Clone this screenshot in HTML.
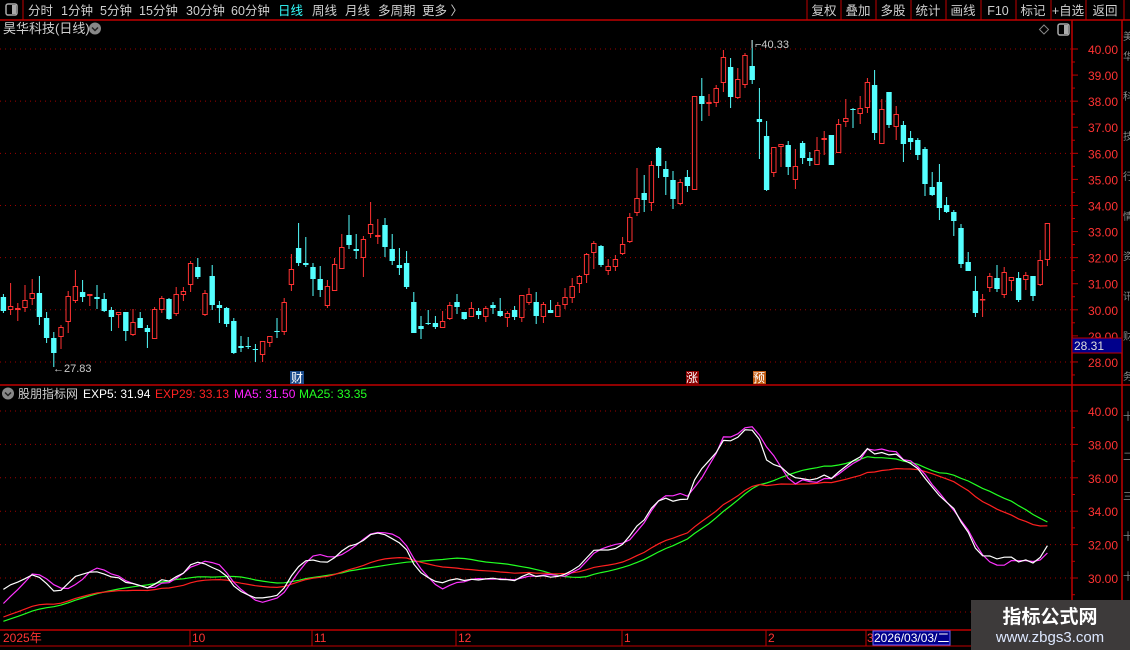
<!DOCTYPE html>
<html><head><meta charset="utf-8">
<style>
*{margin:0;padding:0}
body{width:1130px;height:650px;background:#000;overflow:hidden;position:relative;font-family:"Liberation Sans","Noto Sans CJK SC",sans-serif;}
svg{position:absolute;left:0;top:0}
</style></head>
<body>
<svg id="s" width="1130" height="650" xmlns="http://www.w3.org/2000/svg" font-family="Liberation Sans, Noto Sans CJK SC, sans-serif">
<line x1="0" y1="20" x2="1130" y2="20" stroke="#c00000" stroke-width="1.5"/>
<line x1="23" y1="0" x2="23" y2="20" stroke="#c00000"/>
<rect x="6" y="4" width="11" height="11" rx="2" fill="none" stroke="#aaa" stroke-width="1.5"/>
<rect x="12" y="5" width="4" height="9" fill="#aaa"/>
<g font-size="12.5" fill="#cfcfcf">
<text x="28" y="15">分时</text><text x="61" y="15">1分钟</text><text x="100" y="15">5分钟</text>
<text x="139" y="15">15分钟</text><text x="186" y="15">30分钟</text><text x="231" y="15">60分钟</text>
<text x="278" y="15" fill="#3ff">日线</text><text x="312" y="15">周线</text><text x="345" y="15">月线</text>
<text x="378" y="15">多周期</text><text x="422" y="15">更多 〉</text>
</g>
<g stroke="#c00000">
<line x1="807" y1="0" x2="807" y2="20"/><line x1="841" y1="0" x2="841" y2="20"/><line x1="876" y1="0" x2="876" y2="20"/>
<line x1="911" y1="0" x2="911" y2="20"/><line x1="946" y1="0" x2="946" y2="20"/><line x1="981" y1="0" x2="981" y2="20"/>
<line x1="1016" y1="0" x2="1016" y2="20"/><line x1="1051" y1="0" x2="1051" y2="20"/><line x1="1086" y1="0" x2="1086" y2="20"/>
<line x1="1124" y1="0" x2="1124" y2="20"/>
</g>
<g font-size="12.5" fill="#cfcfcf" text-anchor="middle">
<text x="824" y="15">复权</text><text x="858" y="15">叠加</text><text x="893" y="15">多股</text><text x="928" y="15">统计</text>
<text x="963" y="15">画线</text><text x="998" y="15">F10</text><text x="1033" y="15">标记</text><text x="1068" y="15">+自选</text><text x="1105" y="15">返回</text>
</g>
<text x="3" y="33" font-size="13" fill="#cfcfcf">昊华科技(日线)</text>
<circle cx="95" cy="28.5" r="6" fill="#888"/><path d="M92 27.5l3 3 3-3" stroke="#222" stroke-width="1.5" fill="none"/>
<path d="M1044 25l4.5 4.5-4.5 4.5-4.5-4.5z" fill="none" stroke="#888"/>
<rect x="1058" y="24" width="11" height="11" rx="2" fill="none" stroke="#aaa" stroke-width="1.5"/><rect x="1064" y="25" width="4" height="9" fill="#aaa"/>
<line x1="1072" y1="20" x2="1072" y2="646" stroke="#c00000" stroke-width="1.5"/>
<line x1="1122" y1="20" x2="1122" y2="646" stroke="#c00000" stroke-width="1.5"/>
<line x1="0" y1="385" x2="1130" y2="385" stroke="#c00000" stroke-width="1.5"/>
<line x1="0" y1="630" x2="1122" y2="630" stroke="#c00000" stroke-width="1.5"/>
<line x1="0" y1="646" x2="1122" y2="646" stroke="#c00000" stroke-width="1"/>
<g id="grid"></g>
<g id="candles"></g>
<g id="ind"></g>
<text x="53" y="372" font-size="11" fill="#ccc">←27.83</text>
<line x1="752" y1="40" x2="752" y2="48" stroke="#ccc"/><text x="755" y="48" font-size="11" fill="#ccc">⌐40.33</text>
<rect x="290" y="371" width="14" height="13" fill="#1a4a8a"/><text x="291" y="382" font-size="12" fill="#fff">财</text>
<rect x="686" y="371" width="13" height="13" fill="#8b0000"/><text x="686" y="382" font-size="12" fill="#fff">涨</text>
<rect x="753" y="371" width="13" height="13" fill="#c05a10"/><text x="753" y="382" font-size="12" fill="#fff">预</text>
<rect x="1072" y="338" width="50" height="15" fill="#00008b" stroke="#c00000"/><text x="1074" y="350" font-size="12" fill="#ddd">28.31</text>
<circle cx="8" cy="393.5" r="6" fill="#888"/><path d="M5 392.5l3 3 3-3" stroke="#222" stroke-width="1.5" fill="none"/>
<g font-size="12">
<text x="18" y="398" fill="#cfcfcf">股朋指标网</text>
<text x="83" y="398" fill="#fff">EXP5: 31.94</text>
<text x="155" y="398" fill="#f22">EXP29: 33.13</text>
<text x="234" y="398" fill="#f2f">MA5: 31.50</text>
<text x="299" y="398" fill="#2f2">MA25: 33.35</text>
</g>
<g stroke="#c00000">
<line x1="190" y1="630" x2="190" y2="646"/><line x1="312" y1="630" x2="312" y2="646"/><line x1="456" y1="630" x2="456" y2="646"/>
<line x1="622" y1="630" x2="622" y2="646"/><line x1="766" y1="630" x2="766" y2="646"/><line x1="866" y1="630" x2="866" y2="646"/>
</g>
<g font-size="12" fill="#f33">
<text x="3" y="642">2025年</text><text x="192" y="642">10</text><text x="314" y="642">11</text><text x="458" y="642">12</text>
<text x="624" y="642">1</text><text x="768" y="642">2</text><text x="867" y="642">3</text>
</g>
<rect x="873" y="631" width="77" height="14" fill="#00008b" stroke="#66f"/>
<text x="874" y="642" font-size="12" fill="#fff">2026/03/03/二</text>
<g font-size="10" fill="#888">
<text x="1123" y="40">美</text><text x="1123" y="60">华</text><text x="1123" y="100">科</text><text x="1123" y="140">技</text><text x="1123" y="180">行</text><text x="1123" y="220">情</text><text x="1123" y="260">资</text><text x="1123" y="300">讯</text><text x="1123" y="340">财</text><text x="1123" y="380">务</text><text x="1123" y="420">十</text><text x="1123" y="460">二</text><text x="1123" y="500">三</text><text x="1123" y="540">十</text><text x="1123" y="580">十</text>
</g>
<rect x="971" y="600" width="159" height="50" fill="#3d3a3a"/>
<text x="1050" y="623" font-size="19" font-weight="bold" fill="#fff" text-anchor="middle">指标公式网</text>
<text x="1050" y="642" font-size="15" fill="#dde8ff" text-anchor="middle">www.zbgs3.com</text>
</svg>
<script>
var NS="http://www.w3.org/2000/svg";
function el(p,t,a){var e=document.createElementNS(NS,t);for(var k in a)e.setAttribute(k,a[k]);p.appendChild(e);return e;}
var g=document.getElementById("grid");
for(var p=28;p<=40;p++){var y=49+(40-p)*26.08;
 el(g,"line",{x1:1072,y1:y,x2:1078,y2:y,stroke:"#c00000"});
 el(g,"line",{x1:1072,y1:y+13,x2:1075,y2:y+13,stroke:"#c00000"});
 if(p%2==0)el(g,"line",{x1:0,y1:y,x2:1072,y2:y,stroke:"#a00000","stroke-dasharray":"1 4"});
 var t=el(g,"text",{x:1088,y:y+5,"font-size":"12",fill:"#f33"});t.textContent=p.toFixed(2);}
for(var p=30;p<=40;p+=2){var y=411+(40-p)*16.7;
 el(g,"line",{x1:0,y1:y,x2:1072,y2:y,stroke:"#a00000","stroke-dasharray":"1 4"});
 el(g,"line",{x1:1072,y1:y,x2:1078,y2:y,stroke:"#c00000"});
 el(g,"line",{x1:1072,y1:y+16.7,x2:1075,y2:y+16.7,stroke:"#c00000"});
 var t=el(g,"text",{x:1088,y:y+5,"font-size":"12",fill:"#f33"});t.textContent=p.toFixed(2);}
el(g,"line",{x1:0,y1:612,x2:1072,y2:612,stroke:"#a00000","stroke-dasharray":"1 4"});
var D=[
"c,297,311,294,313","r,306,310,283,315","r,308,310,303,321","r,300,308,285,312","r,293,299,279,305","c,293,317,276,325","c,318,338,312,343","c,338,353,332,367","r,327,337,325,349","r,296,322,291,333",
"r,286,301,270,303","c,292,297,280,302","r,294,296,294,306","c,297,299,285,309","c,299,311,293,312","c,310,317,307,331","r,312,315,312,328","c,312,331,312,341","r,322,335,309,336","c,318,328,312,328",
"c,328,332,325,348","r,309,339,307,339","r,298,310,296,313","c,299,319,298,320","r,294,314,287,316","r,291,295,287,301","r,263,285,261,292","c,267,277,258,279","r,293,315,290,316","c,276,305,265,310",
"c,305,308,301,323","c,308,324,307,327","c,321,353,318,354","c,346,348,336,352","c,346,347,337,349","c,349,350,344,362","r,341,355,341,362","r,336,343,336,347","c,331,332,318,338","r,302,332,298,335",
"r,269,285,254,291","c,248,263,223,266","c,263,265,237,267","c,267,279,263,296","c,279,290,266,297","r,286,306,280,308","r,264,291,258,291","r,247,269,234,269","c,235,245,215,249","c,249,251,234,259",
"r,239,258,236,277","r,224,234,202,238","r,235,237,219,244","c,225,247,218,257","c,249,261,234,265","c,265,268,248,275","c,263,287,251,289","c,302,333,292,333","c,326,329,316,339","c,323,324,310,325",
"c,323,327,316,329","r,321,328,311,328","r,305,319,302,320","c,302,307,294,314","c,312,319,312,320","r,308,317,302,317","c,311,315,308,319","r,308,317,306,322","c,305,308,302,314","c,311,316,298,317",
"r,313,318,311,327","c,310,317,306,320","r,295,318,295,322","r,294,303,288,305","c,302,316,292,324",
"r,304,317,302,323","c,310,313,300,313","r,305,317,302,317","r,297,305,288,309","r,286,298,278,303","r,276,284,275,293","r,254,275,253,283","r,243,253,241,269","c,246,265,245,267","r,266,271,259,275",
"r,259,267,255,271","r,244,254,237,255","r,217,242,213,243","r,198,213,168,216","c,193,200,175,212","r,165,203,161,211","c,148,166,147,178","c,169,177,161,195","c,180,199,171,209","r,182,204,179,205",
"c,177,186,170,192","r,96,190,96,190","c,96,104,78,121","r,102,104,94,116","r,88,103,85,107","r,57,83,50,92","c,67,97,58,108","r,79,98,68,99","r,55,85,53,88","c,66,80,40,84",
"c,119,122,88,159","c,136,190,121,191","r,147,173,147,177","r,144,147,144,167","c,145,167,141,175","r,166,180,149,189","c,143,158,141,164","c,158,161,152,166","r,150,165,137,165","r,138,140,131,155",
"c,135,165,135,165","r,124,153,119,153","r,118,122,99,127","c,109,110,108,128","r,108,114,96,124","r,82,108,78,113","c,85,133,70,140","r,109,144,99,144","c,92,125,92,128","r,114,127,106,140",
"c,125,144,121,162","c,138,142,131,150","c,140,155,138,160","c,149,184,147,196","c,187,195,172,196","c,182,208,164,220","c,205,212,197,213","c,212,221,210,236","c,228,264,224,268","c,262,271,252,271",
"c,291,313,276,317","r,299,300,294,317","r,276,288,273,292","c,278,289,265,292","r,272,295,267,298","r,277,281,277,291","c,278,300,272,302","r,275,280,272,290","c,276,296,276,301","r,260,285,250,286",
"r,223,260,223,266"];
var cg=document.getElementById("candles");var closes=[];
D.forEach(function(s,i){var a=s.split(","),t=a[0],bt=+a[1],bb=+a[2],h=+a[3],l=+a[4];
 var x=3.4+i*7.2; if(bb-bt<1)bb=bt+1;
 if(t=="c"){var col="#54ffff";
  el(cg,"line",{x1:x,y1:h,x2:x,y2:l,stroke:col,"stroke-width":1});
  el(cg,"rect",{x:x-2.7,y:bt,width:5.4,height:bb-bt,fill:col});
  closes.push(40-(bb-49)/26.08);
 }else{var col="#ff3232";
  if(h<bt)el(cg,"line",{x1:x,y1:h,x2:x,y2:bt,stroke:col});
  if(l>bb)el(cg,"line",{x1:x,y1:bb,x2:x,y2:l,stroke:col});
  el(cg,"rect",{x:x-2.2,y:bt+0.5,width:4.4,height:Math.max(bb-bt-1,0.5),fill:"#000",stroke:col,"stroke-width":1});
  closes.push(40-(bt-49)/26.08);}
});
function Y(p){return 411+(40-p)*16.7;}
var n=closes.length,pad=[];for(var k=0;k<25;k++)pad.push(26.3+k*0.08);
var all=pad.concat(closes);
function ema(N,seed){var r=[],v=seed;for(var i=0;i<n;i++){v=(2*closes[i]+(N-1)*v)/(N+1);r.push(v);}return r;}
function ma(N){var r=[];for(var i=0;i<n;i++){var s=0;for(var j=0;j<N;j++)s+=all[25+i-j];r.push(s/N);}return r;}
var series=[[ma(25),"#22ff22"],[ema(29,27.5),"#ff2020"],[ma(5),"#ff33ff"],[ema(5,29.0),"#ffffff"]];
var ig=document.getElementById("ind");
series.forEach(function(sv){var d="";sv[0].forEach(function(v,i){d+=(i?"L":"M")+(3.4+i*7.2).toFixed(1)+" "+Y(v).toFixed(1);});
 el(ig,"path",{d:d,fill:"none",stroke:sv[1],"stroke-width":1.2});});
</script>
</body></html>
